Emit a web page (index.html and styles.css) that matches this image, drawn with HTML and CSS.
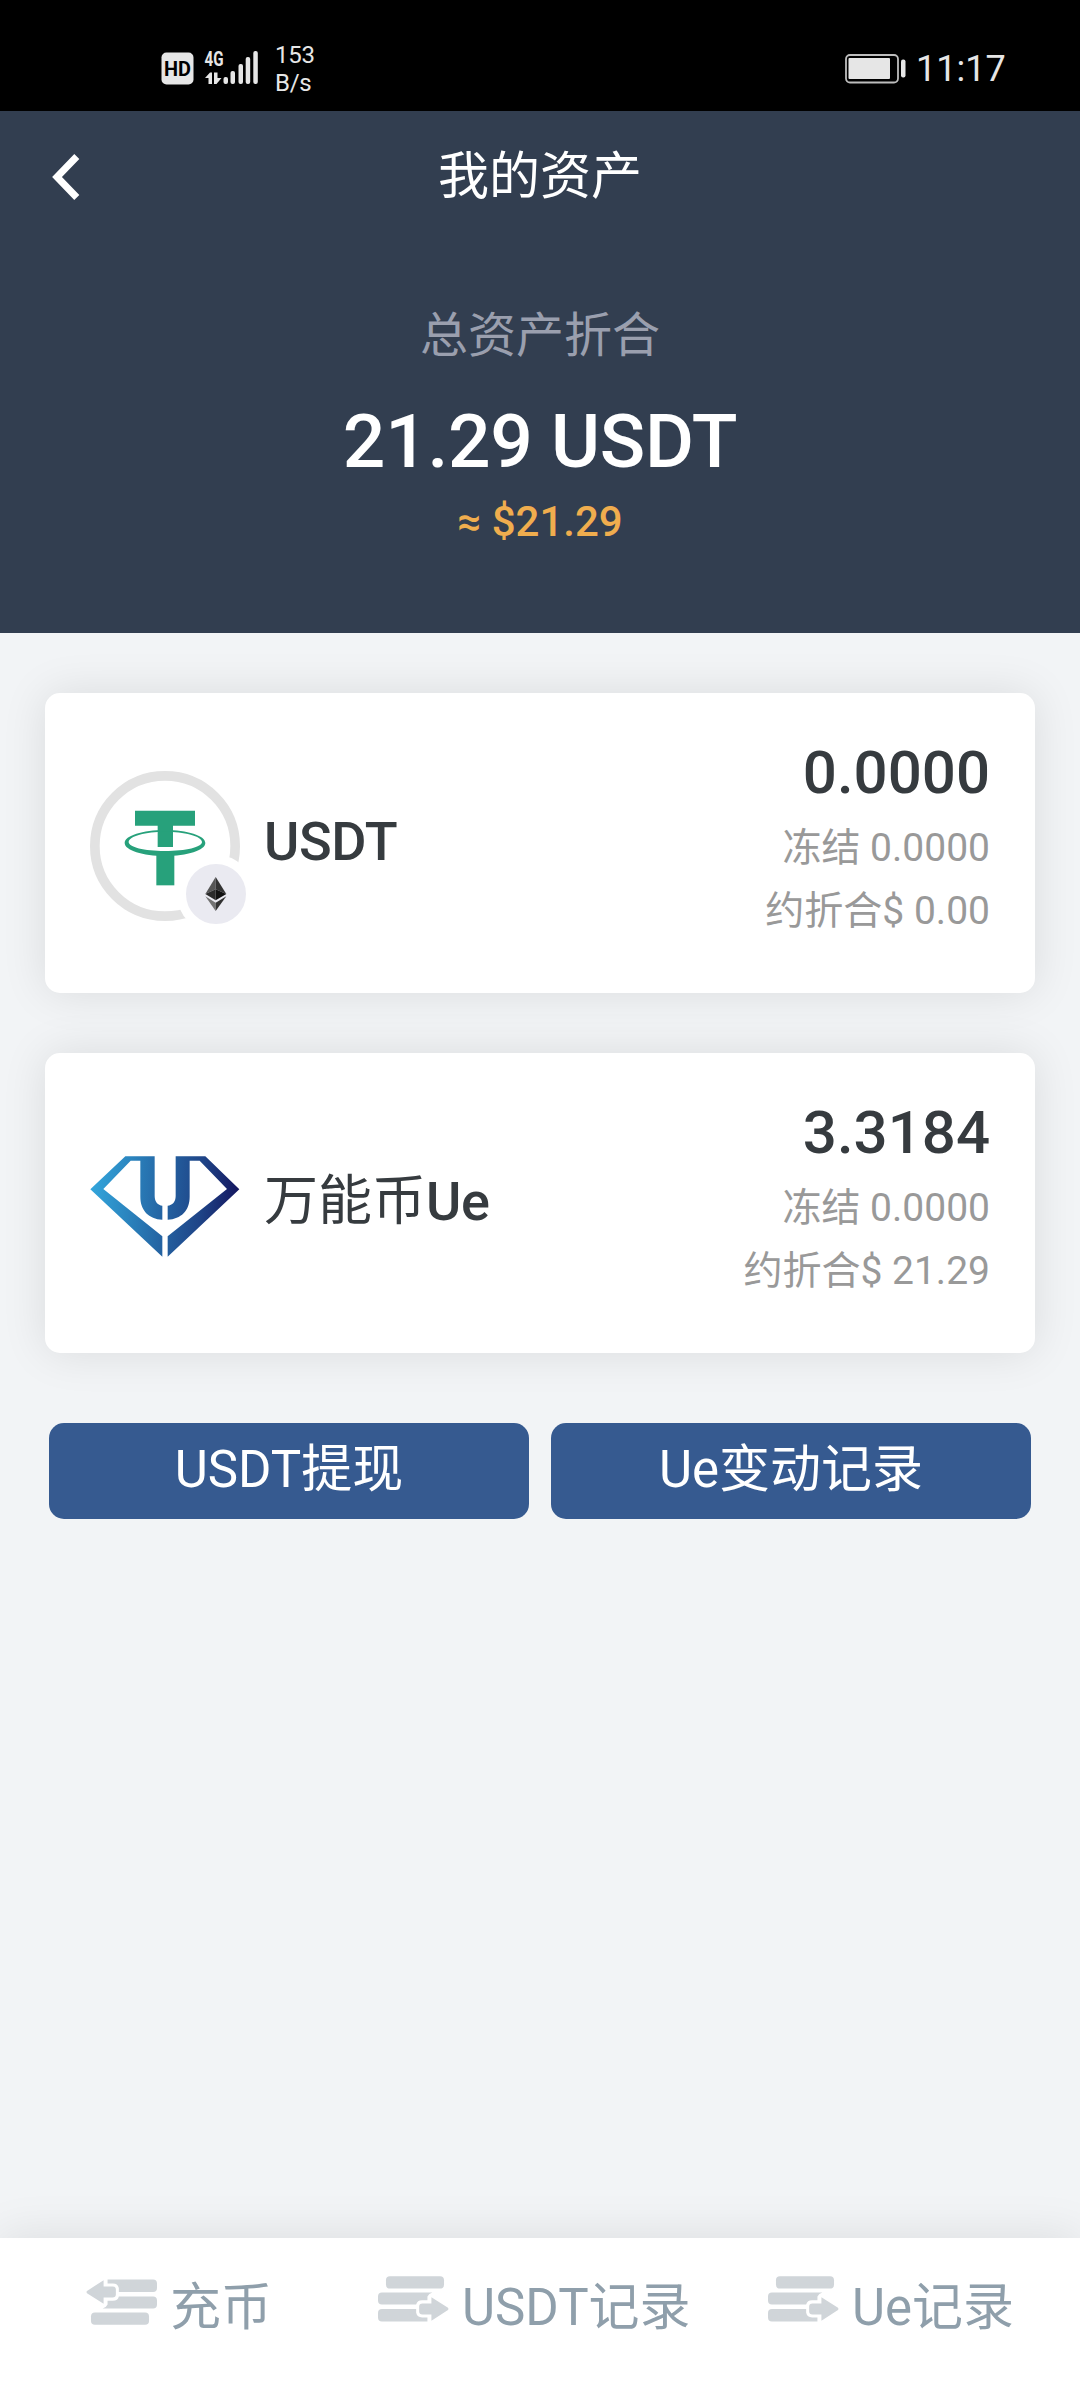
FILE: index.html
```html
<!DOCTYPE html>
<html lang="zh-CN">
<head>
<meta charset="utf-8">
<title>我的资产</title>
<link rel="stylesheet" href="styles.css">
</head>
<body>
<svg class="defs" width="0" height="0" aria-hidden="true">
  <defs>
    <linearGradient id="gem" gradientUnits="userSpaceOnUse" x1="182" y1="420" x2="627" y2="450">
      <stop offset="0" stop-color="#33a6dc"/>
      <stop offset=".25" stop-color="#2b86c0"/>
      <stop offset=".5" stop-color="#2463a2"/>
      <stop offset=".75" stop-color="#1f4487"/>
      <stop offset="1" stop-color="#14165f"/>
    </linearGradient>
    <symbol id="transfer" viewBox="954 167 214 137">
      <rect x="978" y="167" width="175" height="37" rx="12"/>
      <path d="M966 216H1118Q1107 219 1103 228V239H1087Q1072 239 1069 252H966Q954 252 954 240V228Q954 216 966 216Z"/>
      <path d="M966 266H1069V277Q1072 291 1087 291H1103V303H966Q954 303 954 291V278Q954 266 966 266Z"/>
      <path d="M1115 230L1165 262Q1168 266 1165 269L1115 301V282H1088Q1078 282 1078 273V258Q1078 249 1088 249H1115Z"/>
    </symbol>
  </defs>
</svg>
<div class="status">
  <svg class="signal" width="100" height="50" viewBox="160 40 100 50">
    <rect x="161.500" y="52.500" width="32" height="32" rx="5" fill="#e6e6e6"/>
    <text class="hd" x="177.500" y="76" text-anchor="middle" textLength="27" lengthAdjust="spacingAndGlyphs">HD</text>
    <text class="net" x="204.500" y="66" textLength="19" lengthAdjust="spacingAndGlyphs">4G</text>
    <g fill="#e6e6e6">
      <path d="M205 78L210 72.500H212V84H208.500V78Z"/>
      <path d="M214 72.500H217.500V78H221.500L216.500 84H214Z"/>
      <rect x="223.500" y="77" width="4.500" height="7" rx="2"/>
      <rect x="230.500" y="71" width="4.500" height="13" rx="2"/>
      <rect x="238.500" y="64" width="4.500" height="20" rx="2"/>
      <rect x="245.700" y="57" width="4.500" height="27" rx="2"/>
      <rect x="253.300" y="51" width="4.500" height="33" rx="2"/>
    </g>
  </svg>
  <div class="speed">153<br>B/s</div>
  <svg class="battery" width="62" height="30" viewBox="845 54 62 30">
    <rect x="846" y="55" width="52" height="27.500" rx="4" fill="none" stroke="#bdbdbd" stroke-width="1.800"/>
    <rect x="848.500" y="58" width="41.500" height="21" rx="1" fill="#e6e6e6"/>
    <rect x="901" y="59.500" width="4.500" height="18" rx="2" fill="#e6e6e6"/>
  </svg>
  <div class="clock">11:17</div>
</div>
<header class="hero">
  <div class="bar">
    <svg class="back" width="28" height="46" viewBox="0 0 28 46"><path d="M24.800 2.500L5 23L24.800 43.500" fill="none" stroke="#fff" stroke-width="7"/></svg>
    <h1 class="title">我的资产</h1>
  </div>
  <div class="label">总资产折合</div>
  <div class="total">21.29 USDT</div>
  <div class="fiat">≈ $21.29</div>
</header>
<main class="content">
  <section class="card">
    <div class="logo">
      <svg width="150" height="150" viewBox="180 273 450 450">
        <circle cx="405" cy="498" r="210.500" fill="none" stroke="#e2e2e2" stroke-width="29"/>
        <g fill="#27a17b">
          <path d="M315 392H495V437H429V501H383V437H315Z"/>
          <path fill-rule="evenodd" d="M405 450C472 450 526 467 526 489C526 511 472 528 405 528C338 528 284 511 284 489C284 467 338 450 405 450ZM405 455C348 455 296 468 296 486C296 501 342 513 405 513C468 513 516 501 516 486C516 468 462 455 405 455Z"/>
          <path d="M379 525H433V616H379Z"/>
        </g>
      </svg>
      <span class="chain">
        <svg width="22" height="34" viewBox="526 591 66 102">
          <path fill="#565656" d="M558 591L527 642L558 628Z"/>
          <path fill="#333" d="M558 591L590 642L558 628Z"/>
          <path fill="#2a2a2a" d="M527 642L558 628V661Z"/>
          <path fill="#111" d="M590 642L558 628V661Z"/>
          <path fill="#737373" d="M527 649L558 668V693Z"/>
          <path fill="#333" d="M590 649L558 668V693Z"/>
        </svg>
      </span>
    </div>
    <div class="name"><b>USDT</b></div>
    <div class="figures">
      <div class="amount">0.0000</div>
      <div class="note">冻结 0.0000</div>
      <div class="note">约折合$ 0.00</div>
    </div>
  </section>
  <section class="card">
    <div class="logo">
      <svg width="150" height="150" viewBox="180 273 450 450">
        <g fill="url(#gem)">
          <path d="M286 349H374V468C374 486 384 496 397 497V539C356 537 331 511 331 470V362H302L220 447L397 589V650L181 448Z"/>
          <path d="M437 349H526L628 448L413 650V589L591 447L509 362H479V470C479 512 453 537 413 539V497C427 496 437 486 437 468Z"/>
        </g>
      </svg>
    </div>
    <div class="name">万能币<b>Ue</b></div>
    <div class="figures">
      <div class="amount">3.3184</div>
      <div class="note">冻结 0.0000</div>
      <div class="note">约折合$ 21.29</div>
    </div>
  </section>
  <div class="actions">
    <button class="action">USDT提现</button>
    <button class="action">Ue变动记录</button>
  </div>
</main>
<nav class="tabs">
  <a class="tab"><svg class="icon in" width="71" height="46"><use href="#transfer"/></svg>充币</a>
  <a class="tab"><svg class="icon" width="71" height="46"><use href="#transfer"/></svg>USDT记录</a>
  <a class="tab"><svg class="icon" width="71" height="46"><use href="#transfer"/></svg>Ue记录</a>
</nav>
</body>
</html>
```
FILE: styles.css
```css
* { box-sizing: border-box; }
body {
  margin: 0;
  height: 2400px;
  display: flex;
  flex-direction: column;
  background: #f2f4f6;
  font-family: Roboto, "Noto Sans CJK SC", sans-serif;
  overflow: hidden;
}
.defs { position: absolute; }

.status {
  height: 111px;
  flex: none;
  display: flex;
  align-items: flex-start;
  background: #000;
  color: #e6e6e6;
}
.signal { margin: 40px 0 0 160px; }
.hd { font: 700 21px Roboto, sans-serif; fill: #000; }
.net { font: 700 20px Roboto, sans-serif; fill: #e6e6e6; }
.speed { margin: 41px 0 0 15px; width: 100px; font-size: 24px; line-height: 28px; letter-spacing: -.3px; }
.battery { margin: 54px 0 0 470px; }
.clock { margin: 48px 0 0 9px; font-size: 36px; line-height: 42px; }

.hero {
  height: 522px;
  flex: none;
  background: #323e50;
  color: #fff;
  text-align: center;
}
.bar {
  height: 132px;
  display: grid;
  grid-template-columns: 200px 1fr 200px;
  align-items: center;
}
.back { margin-left: 52px; }
.title { margin: 0; font-size: 51px; font-weight: 400; line-height: 60px; padding-bottom: 1px; }
.label { margin-top: 58px; font-size: 48px; line-height: 70px; color: #9a9fae; }
.total { margin-top: 25px; font-size: 75px; font-weight: 500; line-height: 90px; letter-spacing: -.3px; }
.fiat { margin-top: 10px; font-size: 42px; font-weight: 500; line-height: 52px; color: #f0ad4e; }

.content {
  flex: 1;
  padding: 60px 45px 0;
  display: flex;
  flex-direction: column;
  gap: 60px;
}
.card {
  height: 300px;
  padding: 0 45px;
  display: flex;
  align-items: center;
  background: #fff;
  border-radius: 15px;
  box-shadow: 0 0 45px rgba(0, 0, 0, .1);
}
.logo { position: relative; width: 150px; height: 150px; margin-top: 6px; }
.logo svg { display: block; }
.chain {
  position: absolute;
  left: 87px;
  top: 84px;
  width: 78px;
  height: 78px;
  border: 9px solid #fff;
  border-radius: 50%;
  background: #eaeaf1;
  display: flex;
  align-items: center;
  justify-content: center;
}
.name { margin-left: 24px; padding-bottom: 3px; font-size: 54px; line-height: 64px; color: #363b3f; }
.name b { font-weight: 500; letter-spacing: -.4px; }
.figures { margin: 0 0 5px auto; text-align: right; }
.amount { margin-bottom: 9px; font-size: 60px; font-weight: 500; line-height: 70px; color: #363b3f; }
.note { font-size: 39px; line-height: 63px; color: #999; }

.actions { display: flex; gap: 22px; padding: 10px 4px 0; }
.action {
  flex: 1;
  height: 96px;
  padding: 0 0 3px;
  border: 0;
  border-radius: 15px;
  background: #365a90;
  color: #fff;
  font: 400 51px/60px Roboto, "Noto Sans CJK SC", sans-serif;
}

.tabs {
  height: 162px;
  flex: none;
  display: grid;
  grid-template-columns: 292px 390px 1fr;
  padding-left: 86px;
  background: #fff;
  box-shadow: 0 0 45px rgba(0, 0, 0, .1);
}
.tab {
  display: flex;
  align-items: flex-start;
  padding-top: 38px;
  font-size: 51px;
  line-height: 64px;
  color: #8f9fab;
}
.icon { fill: #d0d5d9; margin-right: 13px; }
.in { transform: rotate(180deg); margin-top: 3px; }
```
